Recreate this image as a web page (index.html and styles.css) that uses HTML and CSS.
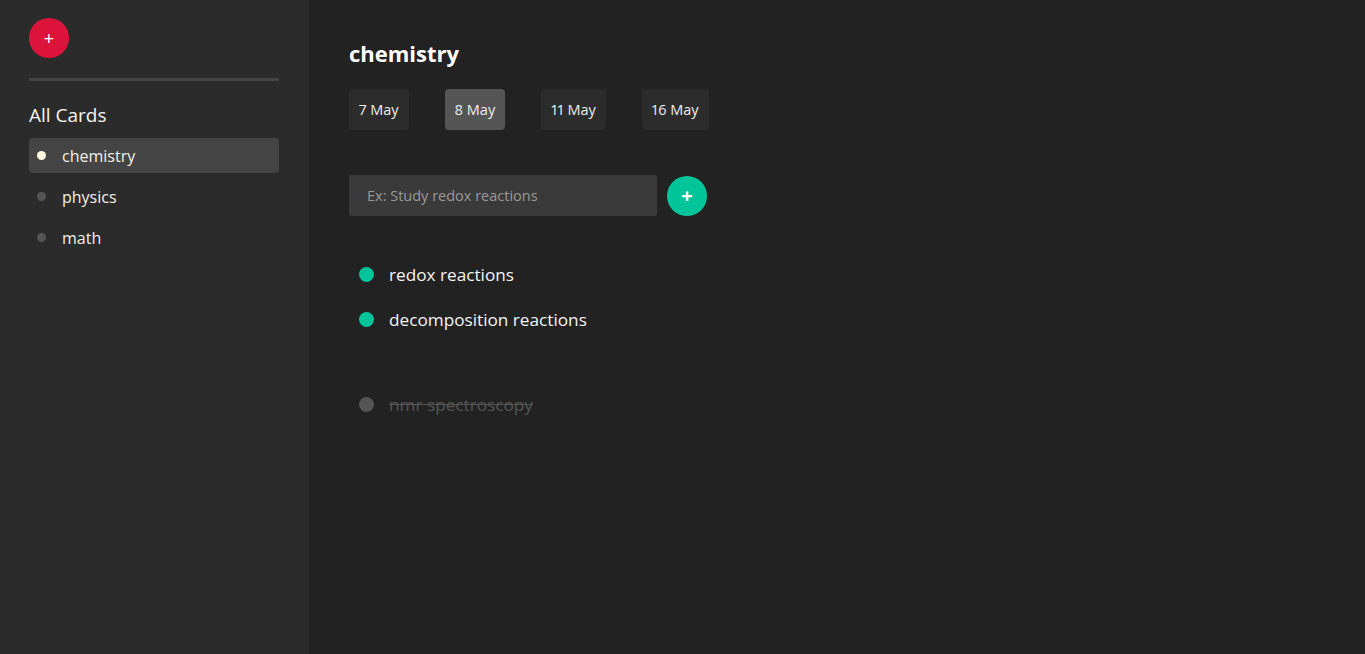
FILE: index.html
```html
<!DOCTYPE html>
<html lang="en">
<head>
<meta charset="utf-8">
<title>Cards</title>
<link rel="stylesheet" href="styles.css">
</head>
<body>
<div class="app">
  <aside class="sidebar">
    <button class="add-card">+</button>
    <div class="divider"></div>
    <h2 class="sidebar-title">All Cards</h2>
    <ul class="card-list">
      <li class="card-item active"><span class="dot"></span>chemistry</li>
      <li class="card-item"><span class="dot"></span>physics</li>
      <li class="card-item"><span class="dot"></span>math</li>
    </ul>
  </aside>
  <main class="main">
    <h1 class="card-title">chemistry</h1>
    <div class="dates">
      <button class="date">7 May</button>
      <button class="date active">8 May</button>
      <button class="date">11 May</button>
      <button class="date">16 May</button>
    </div>
    <div class="new-task">
      <input class="task-input" type="text" placeholder="Ex: Study redox reactions">
      <button class="add-task">+</button>
    </div>
    <ul class="tasks">
      <li class="task"><span class="task-dot"></span>redox reactions</li>
      <li class="task"><span class="task-dot"></span>decomposition reactions</li>
    </ul>
    <ul class="tasks done">
      <li class="task"><span class="task-dot"></span>nmr spectroscopy</li>
    </ul>
  </main>
</div>
</body>
</html>
```
FILE: styles.css
```css
* { box-sizing: border-box; }
html, body { margin: 0; padding: 0; height: 100%; }
body {
  font-family: "Open Sans", "Liberation Sans", sans-serif;
  background: #222222;
  color: #f2f2f2;
}
.app { display: flex; min-height: 100vh; }
.sidebar {
  width: 309px;
  flex: 0 0 309px;
  background: #2b2b2b;
  padding: 18px 30px 0 29px;
  display: flex;
  flex-direction: column;
}
.add-card {
  width: 40px; height: 40px;
  border-radius: 50%;
  border: none;
  background: #dc143c;
  color: #fff;
  font-family: inherit;
  font-size: 18px;
  line-height: 40px;
  padding: 0;
}
.divider { height: 3px; background: #444; margin-top: 20px; }
.sidebar-title {
  margin: 21px 0 0;
  font-size: 19px;
  font-weight: 400;
  line-height: 26px;
  color: #f4f4f4;
}
.card-list {
  list-style: none;
  margin: 10px 0 0;
  padding: 0;
  display: flex;
  flex-direction: column;
  gap: 6px;
}
.card-item {
  height: 35px;
  display: flex;
  align-items: center;
  padding-left: 8px;
  border-radius: 4px;
  font-size: 16px;
  color: #f4f0e6;
}
.card-item .dot {
  width: 9px; height: 9px;
  border-radius: 50%;
  background: #555;
  margin-right: 16px;
}
.card-item.active { background: #444; }
.card-item.active .dot { background: #fff8dc; }
.main { flex: 1; padding: 38px 40px 0; }
.card-title {
  margin: 0;
  font-size: 22px;
  line-height: 30px;
  font-weight: 700;
  color: #fff;
}
.dates { display: flex; gap: 36px; margin-top: 21px; }
.date {
  height: 41px;
  padding: 0 10px;
  border: none;
  border-radius: 4px;
  background: #2c2c2c;
  color: #eee;
  font-family: inherit;
  font-size: 14.5px;
  font-variant-numeric: proportional-nums;
}
.date.active { background: #555; }
.new-task { display: flex; align-items: center; gap: 10px; margin-top: 45px; }
.task-input {
  width: 308px; height: 41px;
  border: none;
  border-radius: 2px;
  background: #3a3a3a;
  padding: 0 18px;
  font-family: inherit;
  font-size: 14.5px;
  color: #eee;
  outline: none;
}
.task-input::placeholder { color: #999; }
.add-task {
  width: 40px; height: 40px;
  border-radius: 50%;
  border: none;
  background: #00c49a;
  color: #fff;
  font-family: inherit;
  font-size: 20px;
  font-weight: 700;
  line-height: 40px;
  padding: 0;
}
.tasks {
  list-style: none;
  margin: 46px 0 0;
  padding: 0 0 0 10px;
  display: flex;
  flex-direction: column;
  gap: 20px;
}
.tasks.done { margin-top: 60px; }
.task {
  height: 25px;
  display: flex;
  align-items: center;
  font-size: 17.2px;
  color: #f4f4f4;
}
.task-dot {
  width: 15px; height: 15px;
  border-radius: 50%;
  background: #00c49a;
  margin-right: 15px;
}
.done .task { color: #555; text-decoration: line-through; }
.done .task-dot { background: #555; }
```
